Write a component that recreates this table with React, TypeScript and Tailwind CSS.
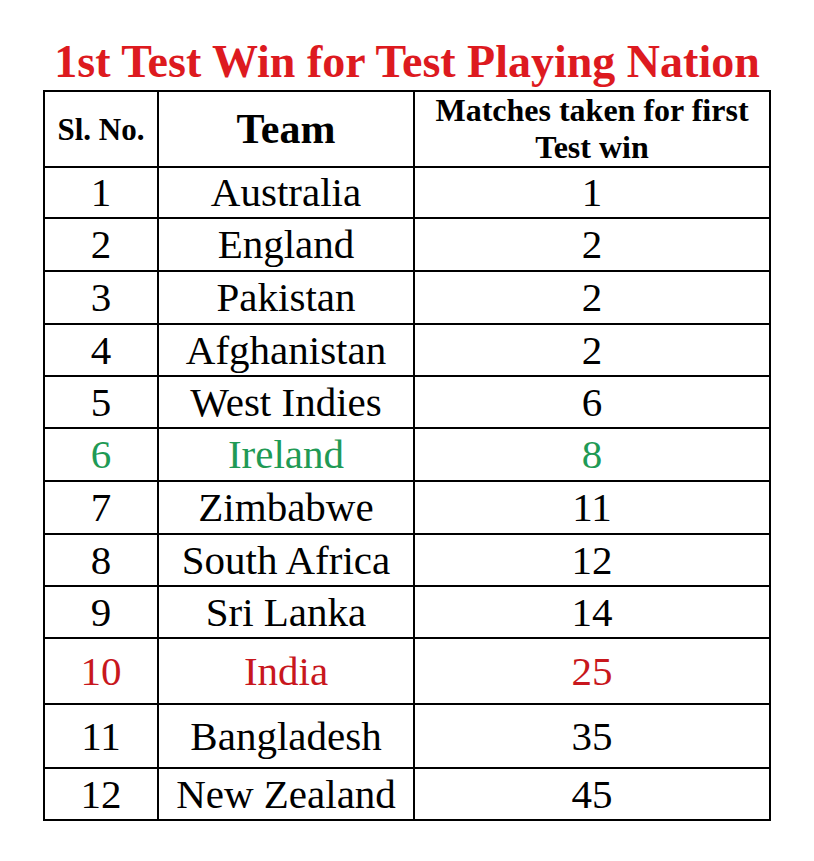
const rows = [
  { no: '1', team: 'Australia', matches: '1', tone: '', h: 'h-[51px]' },
  { no: '2', team: 'England', matches: '2', tone: '', h: 'h-[53px]' },
  { no: '3', team: 'Pakistan', matches: '2', tone: '', h: 'h-[53px]' },
  { no: '4', team: 'Afghanistan', matches: '2', tone: '', h: 'h-[52px]' },
  { no: '5', team: 'West Indies', matches: '6', tone: '', h: 'h-[52px]' },
  { no: '6', team: 'Ireland', matches: '8', tone: 'text-[#1f9a55]', h: 'h-[53px]' },
  { no: '7', team: 'Zimbabwe', matches: '11', tone: '', h: 'h-[53px]' },
  { no: '8', team: 'South Africa', matches: '12', tone: '', h: 'h-[52px]' },
  { no: '9', team: 'Sri Lanka', matches: '14', tone: '', h: 'h-[52px]' },
  { no: '10', team: 'India', matches: '25', tone: 'text-[#c8171d]', h: 'h-[66px]' },
  { no: '11', team: 'Bangladesh', matches: '35', tone: '', h: 'h-[64px]' },
  { no: '12', team: 'New Zealand', matches: '45', tone: '', h: 'h-[52px]' },
]

export default function App() {
  return (
    <div className="min-h-[861px] w-[814px] bg-white pt-[39px] font-['Liberation_Serif',serif] text-black">
      <h1 className="mb-[5px] text-center text-[46px] font-bold leading-none text-[#dd1a1f]">
        1st Test Win for Test Playing Nation
      </h1>
      <table className="mx-auto w-[726px] table-fixed border-collapse border-2 border-black text-center">
        <colgroup>
          <col className="w-[114px]" />
          <col className="w-[256px]" />
          <col className="w-[356px]" />
        </colgroup>
        <thead>
          <tr className="h-[76px]">
            <th className="border-2 border-black p-0 align-middle text-[31px] font-bold leading-none">Sl. No.</th>
            <th className="border-2 border-black p-0 align-middle text-[42px] font-bold leading-none">Team</th>
            <th className="border-2 border-black p-0 align-middle text-[32px] font-bold leading-[37px]">
              Matches taken for first
              <br />
              Test win
            </th>
          </tr>
        </thead>
        <tbody>
          {rows.map((r) => (
            <tr key={r.no} className={r.h}>
              <td className={`border-2 border-black p-0 align-middle text-[41px] leading-none ${r.tone}`}>{r.no}</td>
              <td className={`border-2 border-black p-0 align-middle text-[41px] leading-none ${r.tone}`}>{r.team}</td>
              <td className={`border-2 border-black p-0 align-middle text-[41px] leading-none ${r.tone}`}>{r.matches}</td>
            </tr>
          ))}
        </tbody>
      </table>
    </div>
  )
}
